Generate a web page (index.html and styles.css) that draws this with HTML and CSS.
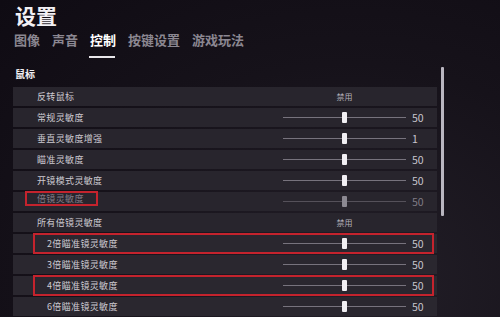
FILE: index.html
```html
<!DOCTYPE html>
<html lang="zh-CN">
<head>
  <meta charset="UTF-8" />
  <title>设置</title>
  <link rel="stylesheet" href="styles.css">
</head>
<body>
  <div class="settings">
    <h1 class="title">设置</h1>
    <div class="tabs">
      <span class="tab">图像</span>
      <span class="tab">声音</span>
      <span class="tab active">控制</span>
      <span class="tab">按键设置</span>
      <span class="tab">游戏玩法</span>
    </div>

    <div class="content">
      <div class="list">
        <div class="section">鼠标</div>

        <div class="row">
          <span class="label">反转鼠标</span>
          <span class="status">禁用</span>
          <span class="value"></span>
        </div>
        <div class="row">
          <span class="label">常规灵敏度</span>
          <span class="slider"><i class="thumb"></i></span>
          <span class="value">50</span>
        </div>
        <div class="row">
          <span class="label">垂直灵敏度增强</span>
          <span class="slider"><i class="thumb"></i></span>
          <span class="value">1</span>
        </div>
        <div class="row">
          <span class="label">瞄准灵敏度</span>
          <span class="slider"><i class="thumb"></i></span>
          <span class="value">50</span>
        </div>
        <div class="row">
          <span class="label">开镜模式灵敏度</span>
          <span class="slider"><i class="thumb"></i></span>
          <span class="value">50</span>
        </div>
        <div class="row disabled">
          <span class="label"><span class="boxed">倍镜灵敏度</span></span>
          <span class="slider"><i class="thumb"></i></span>
          <span class="value">50</span>
        </div>
        <div class="row">
          <span class="label">所有倍镜灵敏度</span>
          <span class="status">禁用</span>
          <span class="value"></span>
        </div>
        <div class="row sub marked">
          <span class="label">2倍瞄准镜灵敏度</span>
          <span class="slider"><i class="thumb"></i></span>
          <span class="value">50</span>
        </div>
        <div class="row sub">
          <span class="label">3倍瞄准镜灵敏度</span>
          <span class="slider"><i class="thumb"></i></span>
          <span class="value">50</span>
        </div>
        <div class="row sub marked">
          <span class="label">4倍瞄准镜灵敏度</span>
          <span class="slider"><i class="thumb"></i></span>
          <span class="value">50</span>
        </div>
        <div class="row sub">
          <span class="label">6倍瞄准镜灵敏度</span>
          <span class="slider"><i class="thumb"></i></span>
          <span class="value">50</span>
        </div>
      </div>
      <div class="scrollbar"><div class="scroll-thumb"></div></div>
    </div>
  </div>
</body>
</html>
```

FILE: styles.css
```css
* {
  box-sizing: border-box;
}
body {
  margin: 0;
  width: 500px;
  height: 317px;
  overflow: hidden;
  font-family: 'Noto Sans CJK SC', 'Noto Sans', sans-serif;
  background: radial-gradient(ellipse at 70% 90%, #231f28 0%, #16121a 55%, #0f0b13 100%);
  color: #fff;
}
.settings {
  padding-top: 2px;
}
.title {
  margin: 0 0 0 15px;
  font-size: 21px;
  line-height: 26px;
  font-weight: 700;
  color: #f2f0f4;
}
.tabs {
  display: flex;
  gap: 12px;
  margin: 4px 0 0 14px;
  height: 22px;
}
.tab {
  font-size: 13px;
  line-height: 16px;
  font-weight: 700;
  color: #8b8791;
  position: relative;
}
.tab.active {
  color: #fff;
}
.tab.active::after {
  content: '';
  position: absolute;
  left: -1px;
  right: 1px;
  bottom: -4px;
  height: 2px;
  background: #e8e6ea;
}
.content {
  display: flex;
  margin-top: 13px;
}
.list {
  width: 424px;
  margin-left: 13px;
}
.section {
  height: 20px;
  padding-left: 2px;
  font-size: 10px;
  line-height: 14px;
  font-weight: 700;
  color: #f0eef2;
}
.row {
  position: relative;
  display: flex;
  align-items: center;
  height: 19px;
  margin-bottom: 2px;
  padding-left: 24px;
  background: #28252d;
  font-size: 9px;
  letter-spacing: 0.35px;
  color: #cdcad1;
}
.row.sub {
  padding-left: 34px;
  background: #2a272f;
}
.label {
  flex: 1;
  line-height: 11px;
}
.slider {
  position: relative;
  width: 123px;
  height: 19px;
}
.slider::before {
  content: '';
  position: absolute;
  left: 0;
  right: 0;
  top: 9px;
  height: 1px;
  background: #77737d;
}
.thumb {
  position: absolute;
  left: 59px;
  top: 4px;
  width: 5px;
  height: 11px;
  border-radius: 1px;
  background: #f1eff3;
}
.status {
  width: 123px;
  text-align: center;
  font-size: 8px;
  letter-spacing: 0;
  color: #b3b0b8;
}
.value {
  width: 25px;
  margin-left: 6px;
  font-size: 10.5px;
  letter-spacing: 0;
  color: #c9c6cd;
}
.row.disabled .label,
.row.disabled .value {
  color: #807c86;
}
.row.disabled .thumb {
  background: #8c8992;
}
.row.disabled .slider::before {
  background: #55515a;
}
.boxed {
  display: inline-block;
  position: relative;
  top: -3px;
  margin-left: -12px;
  padding: 0 12px 0 10px;
  border: 2px solid #c4232d;
}
.row.marked::after {
  content: '';
  position: absolute;
  left: 20px;
  right: 3px;
  top: -1px;
  bottom: -1px;
  border: 2px solid #c4232d;
}
.scrollbar {
  width: 3px;
  margin-left: 4px;
  height: 250px;
}
.scroll-thumb {
  height: 149px;
  border-radius: 1px;
  background: #b9b6c0;
}
```
